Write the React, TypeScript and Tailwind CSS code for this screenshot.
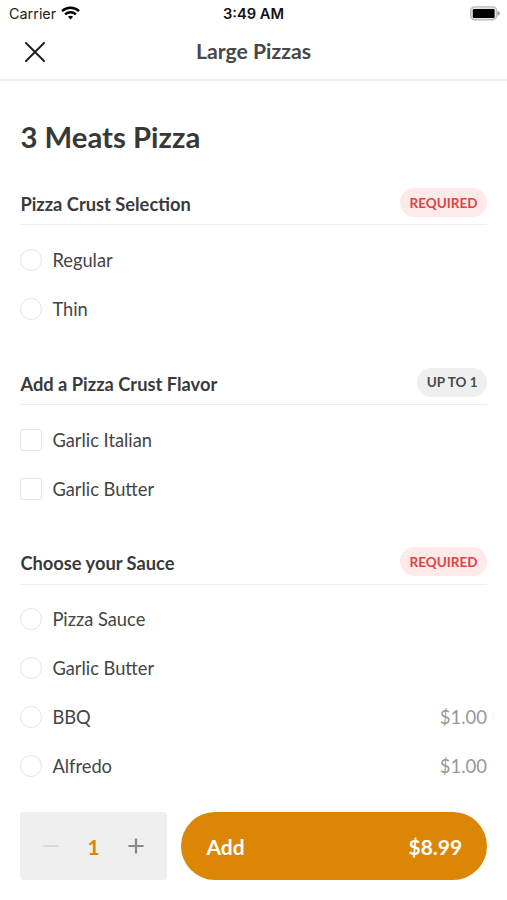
type Option = { name: string; price?: string };
type Group = { title: string; badge: string; required: boolean; options: Option[] };

const groups: Group[] = [
  { title: "Pizza Crust Selection", badge: "REQUIRED", required: true, options: [{ name: "Regular" }, { name: "Thin" }] },
  { title: "Add a Pizza Crust Flavor", badge: "UP TO 1", required: false, options: [{ name: "Garlic Italian" }, { name: "Garlic Butter" }] },
  {
    title: "Choose your Sauce",
    badge: "REQUIRED",
    required: true,
    options: [{ name: "Pizza Sauce" }, { name: "Garlic Butter" }, { name: "BBQ", price: "$1.00" }, { name: "Alfredo", price: "$1.00" }],
  },
];

function StatusBar() {
  return (
    <div className="grid h-7 grid-cols-3 items-center pl-[9px] pr-[7px] font-['Inter',sans-serif] leading-none text-[#222]">
      <div className="flex items-center gap-[5px]">
        <span className="text-[14.4px]">Carrier</span>
        <svg className="-mt-[2px]" width="19" height="14" viewBox="0 0 19 14" fill="none" stroke="#000" strokeWidth="2.5">
          <path d="M1 5.2C5.8.7 13.2.7 18 5.2" />
          <path d="M4.1 8.4c3.1-2.8 7.7-2.8 10.8 0" />
          <path d="M6.9 10.7c1.5-1.3 3.7-1.3 5.2 0L9.5 13.4z" fill="#000" stroke="none" />
        </svg>
      </div>
      <span className="-ml-[2px] text-center text-[14.7px] font-semibold text-[#111]">3:49 AM</span>
      <svg className="-mt-[2px] justify-self-end" width="31" height="16" viewBox="0 0 31 16">
        <rect x="1.7" y="1.9" width="26" height="12.8" rx="4" fill="#e6e6e6" stroke="#bbb" strokeWidth="1.4" />
        <rect x="3.8" y="3.9" width="21.8" height="9" rx="1" fill="#000" />
        <path d="M28.6 5.9c3 .8 3 4 0 4.8z" fill="#999" />
      </svg>
    </div>
  );
}

function OptionGroup({ group }: { group: Group }) {
  return (
    <section className="mb-[34.2px]">
      <div className="flex h-[37.5px] items-start justify-between border-b border-[#eee]">
        <h2 className="pt-[5px] text-[18.3px] font-bold leading-[22px] text-[#3a3a3a]">{group.title}</h2>
        <span
          className={`flex h-[29px] items-center rounded-full px-[9.5px] pt-px text-[13.5px] font-bold ${
            group.required ? "bg-[#ffe9e9] text-[#dc4444]" : "bg-[#efefef] text-[#4a4a4a]"
          }`}
        >
          {group.badge}
        </span>
      </div>
      <ul className="pt-[10.4px]">
        {group.options.map((o) => (
          <li key={o.name} className="flex h-[48.75px] items-center text-[18.3px] text-[#444]">
            <span className={`mr-[10px] size-[22px] border-[1.5px] border-[#e4e4e4] ${group.required ? "rounded-full" : "rounded-[3px]"}`} />
            <span className="pt-[1.5px]">{o.name}</span>
            {o.price && <span className="ml-auto pt-[2px] text-[18.5px] text-[#999]">{o.price}</span>}
          </li>
        ))}
      </ul>
    </section>
  );
}

export default function App() {
  return (
    <div className="flex h-[900px] w-[507px] flex-col overflow-hidden bg-white font-['Lato',sans-serif]">
      <StatusBar />
      <header className="grid h-[52.5px] shrink-0 grid-cols-[40px_1fr_40px] items-center border-b-2 border-[#eee] px-[21px] pb-[2px]">
        <svg className="ml-[4px]" width="20" height="20" viewBox="0 0 20 20" stroke="#222" strokeWidth="2" strokeLinecap="round">
          <path d="M1 1l18 18M19 1L1 19" />
        </svg>
        <h1 className="text-center text-[21.2px] font-bold text-[#484848]">Large Pizzas</h1>
      </header>
      <main className="h-[711.5px] shrink-0 overflow-hidden pl-[20.4px] pr-5">
        <h2 className="pb-[33.2px] pt-[38.3px] text-[29.3px] font-bold leading-9 text-[#383838]">3 Meats Pizza</h2>
        {groups.map((g) => (
          <OptionGroup key={g.title} group={g} />
        ))}
      </main>
      <footer className="flex flex-1 gap-[14.5px] pl-[20.4px] pr-[19.8px] pt-[20.4px]">
        <div className="flex h-[68px] w-[146.6px] items-center justify-between rounded-[4px] bg-[#efefef] px-[23px]">
          <svg width="16" height="16" viewBox="0 0 16 16" stroke="#d9d9d9" strokeWidth="2">
            <path d="M.5 8h15" />
          </svg>
          <span className="text-[21px] font-bold text-[#dc8605]">1</span>
          <svg width="16" height="16" viewBox="0 0 16 16" stroke="#888" strokeWidth="2.2">
            <path d="M.5 8h15M8 .5v15" />
          </svg>
        </div>
        <button className="flex h-[68px] flex-1 items-center justify-between rounded-full bg-[#dc8605] px-[25px] text-[21px] font-bold text-white">
          <span>Add</span>
          <span>$8.99</span>
        </button>
      </footer>
    </div>
  );
}
